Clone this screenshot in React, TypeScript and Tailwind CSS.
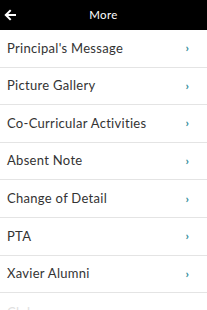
import React from "react";

const items = [
  "Principal's Message",
  "Picture Gallery",
  "Co-Curricular Activities",
  "Absent Note",
  "Change of Detail",
  "PTA",
  "Xavier Alumni",
];

export default function App() {
  return (
    <div className="w-[207px] h-[310px] overflow-hidden bg-white" style={{ fontFamily: "Lato, 'Noto Sans', sans-serif" }}>
      <div className="h-[30px] bg-black flex items-center relative">
        <svg className="absolute left-[4px] top-[9px]" width="12" height="12" viewBox="0 0 12 12">
          <path d="M11 6H2.2M6 1.8L1.8 6L6 10.2" stroke="white" strokeWidth="2" fill="none" strokeLinecap="square" />
        </svg>
        <div className="flex-1 text-center text-white text-[11.5px] tracking-[0.4px]">More</div>
      </div>
      {items.map((t) => (
        <div key={t} className="h-[37.6px] flex items-center justify-between pl-[7px] pr-[18px] border-b border-[#e4e4e4]">
          <span className="text-[13px] text-[#333333] tracking-[0.3px]">{t}</span>
          <span className="text-[12px] leading-none font-bold text-[#2f8a99]">›</span>
        </div>
      ))}
      <div className="h-[37px] flex items-start pl-[7px] pt-[12px]">
        <span className="text-[13px] leading-[14px] text-[#e0e0e0] tracking-[0.3px]">Clubs</span>
      </div>
    </div>
  );
}
